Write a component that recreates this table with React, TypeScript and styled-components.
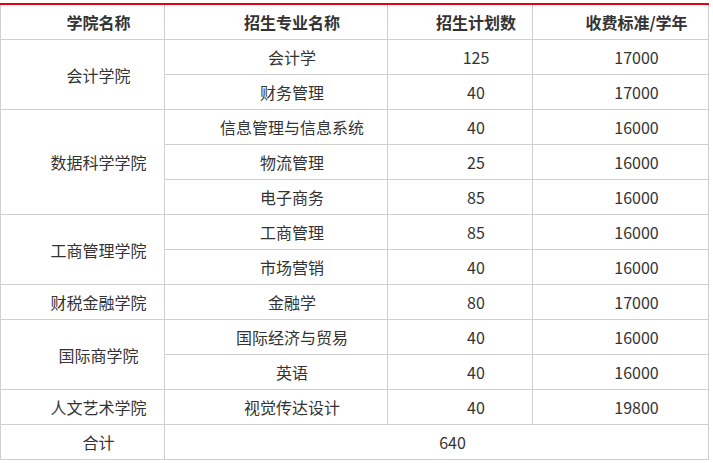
import { Fragment } from "react"
import styled, { createGlobalStyle } from "styled-components"

const GlobalStyle = createGlobalStyle`
    html, body {
        margin: 0;
        padding: 0;
        background: #fff;
    }
    body {
        font-family: "Noto Sans CJK SC", "Microsoft YaHei", sans-serif;
    }
`

const Grid = styled.div`
    display: grid;
    grid-template-columns: 163px 222px 144px 175px;
    grid-auto-rows: 34px;
    gap: 1px;
    width: 709px;
    box-sizing: border-box;
    margin-top: 3px;
    padding: 0 1px 1px 1px;
    border-top: 2px solid #e60012;
    background: #cfcfcf;
`

const Cell = styled.div<{ $span?: number; $cols?: number; $head?: boolean }>`
    display: flex;
    align-items: center;
    justify-content: center;
    padding-left: 32px;
    box-sizing: border-box;
    background: #fff;
    color: #333;
    font-size: 16px;
    font-weight: ${p => (p.$head ? 700 : 400)};
    white-space: nowrap;
    grid-row: ${p => (p.$span ? `span ${p.$span}` : "auto")};
    grid-column: ${p => (p.$cols ? `span ${p.$cols}` : "auto")};
`

interface IMajor {
    nome: string
    plano: number
    taxa: number
}

interface ICollege {
    nome: string
    cursos: IMajor[]
}

const dados: ICollege[] = [
    { nome: "会计学院", cursos: [{ nome: "会计学", plano: 125, taxa: 17000 }, { nome: "财务管理", plano: 40, taxa: 17000 }] },
    {
        nome: "数据科学学院",
        cursos: [
            { nome: "信息管理与信息系统", plano: 40, taxa: 16000 },
            { nome: "物流管理", plano: 25, taxa: 16000 },
            { nome: "电子商务", plano: 85, taxa: 16000 },
        ],
    },
    { nome: "工商管理学院", cursos: [{ nome: "工商管理", plano: 85, taxa: 16000 }, { nome: "市场营销", plano: 40, taxa: 16000 }] },
    { nome: "财税金融学院", cursos: [{ nome: "金融学", plano: 80, taxa: 17000 }] },
    { nome: "国际商学院", cursos: [{ nome: "国际经济与贸易", plano: 40, taxa: 16000 }, { nome: "英语", plano: 40, taxa: 16000 }] },
    { nome: "人文艺术学院", cursos: [{ nome: "视觉传达设计", plano: 40, taxa: 19800 }] },
]

function App() {
    const total = dados.reduce((s, c) => s + c.cursos.reduce((a, m) => a + m.plano, 0), 0)

    return (
        <>
            <GlobalStyle />
            <Grid>
                <Cell $head>学院名称</Cell>
                <Cell $head>招生专业名称</Cell>
                <Cell $head>招生计划数</Cell>
                <Cell $head>收费标准/学年</Cell>

                {dados.map(college =>
                    college.cursos.map((m, i) => (
                        <Fragment key={m.nome}>
                            {i === 0 && <Cell $span={college.cursos.length}>{college.nome}</Cell>}
                            <Cell>{m.nome}</Cell>
                            <Cell>{m.plano}</Cell>
                            <Cell>{m.taxa}</Cell>
                        </Fragment>
                    ))
                )}

                <Cell>合计</Cell>
                <Cell $cols={3}>{total}</Cell>
            </Grid>
        </>
    )
}

export default App
